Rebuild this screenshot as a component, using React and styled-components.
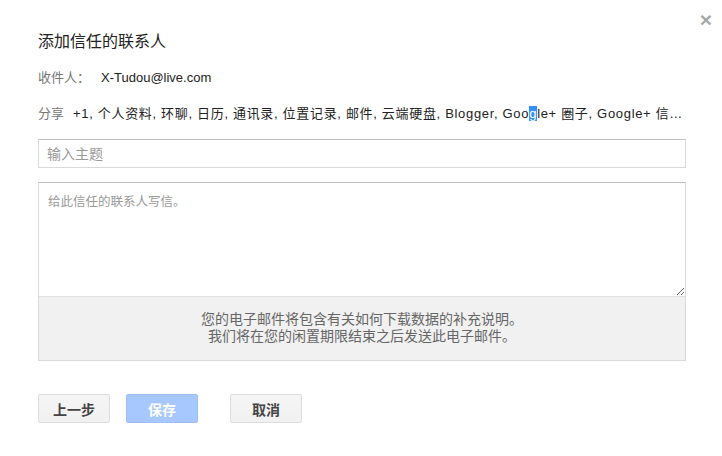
import styled, { createGlobalStyle } from "styled-components";

const GlobalStyle = createGlobalStyle`
  body {
    margin: 0;
    background: #ffffff;
    font-family: "Liberation Sans", Arial, "Noto Sans CJK SC", sans-serif;
    font-size: 13px;
    color: #222;
  }
`;

const Dialog = styled.div`
  position: relative;
  width: 722px;
  height: 456px;
  box-sizing: border-box;
  padding: 30px 36px 0 38px;
  background: #fff;
`;

const Close = styled.div`
  position: absolute;
  top: 11px;
  right: 9px;
  width: 14px;
  height: 18px;
  color: #a8a8a8;
  font-size: 21px;
  font-weight: bold;
  line-height: 18px;
  text-align: center;
  cursor: pointer;
`;

const Title = styled.div`
  font-size: 16px;
  line-height: 24px;
  color: #222;
`;

const InfoRow = styled.div`
  display: flex;
  align-items: center;
  gap: ${({ gap }) => gap || 8}px;
  margin-top: ${({ top }) => top}px;
  line-height: 18px;
  white-space: nowrap;
`;

const Label = styled.span`
  color: #777;
  flex-shrink: 0;
`;

const Value = styled.span`
  color: #222;
  flex: 1;
  min-width: 0;
  letter-spacing: ${({ spread }) => spread || 0}px;
`;

const Sel = styled.span`
  background: #3390ff;
  color: #fff;
`;

const SubjectInput = styled.input`
  display: block;
  box-sizing: border-box;
  width: 100%;
  height: 29px;
  margin-top: 16px;
  padding: 0 8px;
  border: 1px solid #d9d9d9;
  border-top-color: #c0c0c0;
  font: inherit;
  font-size: 14px;
  outline: none;
  &::placeholder {
    color: #999;
  }
`;

const MessageBox = styled.div`
  margin-top: 14px;
  border: 1px solid #d9d9d9;
  border-top-color: #c0c0c0;
`;

const MessageArea = styled.textarea`
  display: block;
  box-sizing: border-box;
  width: 100%;
  height: 113px;
  margin: 0;
  padding: 8px 9px;
  border: none;
  font: inherit;
  font-size: 12.5px;
  outline: none;
  resize: vertical;
  &::placeholder {
    color: #999;
  }
`;

const Notice = styled.div`
  border-top: 1px solid #e0e0e0;
  background: #f1f1f1;
  color: #666;
  font-size: 14px;
  line-height: 17px;
  text-align: center;
  padding: 14px 0 15px;
`;

const Buttons = styled.div`
  display: flex;
  margin-top: 33px;
`;

const Button = styled.button`
  box-sizing: border-box;
  min-width: 72px;
  height: 29px;
  margin-left: ${({ gapLeft }) => gapLeft || 0}px;
  padding: 0 8px;
  border-radius: 2px;
  font-family: inherit;
  font-size: 14px;
  font-weight: bold;
  cursor: default;
  border: 1px solid ${({ primary }) => (primary ? "#9dbff6" : "#dcdcdc")};
  background: ${({ primary }) =>
    primary ? "#a6c8ff" : "linear-gradient(#f5f5f5, #f1f1f1)"};
  color: ${({ primary }) => (primary ? "#fff" : "#444")};
`;

const App = () => {
  return (
    <>
      <GlobalStyle />
      <Dialog>
        <Close>×</Close>
        <Title>添加信任的联系人</Title>
        <InfoRow top={15} gap={11}>
          <Label>收件人：</Label>
          <Value>X-Tudou@live.com</Value>
        </InfoRow>
        <InfoRow top={18} gap={9}>
          <Label>分享</Label>
          <Value spread={0.68}>
            +1, 个人资料, 环聊, 日历, 通讯录, 位置记录, 邮件, 云端硬盘, Blogger, Goo
            <Sel>g</Sel>le+ 圈子, Google+ 信…
          </Value>
        </InfoRow>
        <SubjectInput placeholder="输入主题" />
        <MessageBox>
          <MessageArea placeholder="给此信任的联系人写信。" />
          <Notice>
            您的电子邮件将包含有关如何下载数据的补充说明。
            <br />
            我们将在您的闲置期限结束之后发送此电子邮件。
          </Notice>
        </MessageBox>
        <Buttons>
          <Button>上一步</Button>
          <Button primary gapLeft={16}>保存</Button>
          <Button gapLeft={32}>取消</Button>
        </Buttons>
      </Dialog>
    </>
  );
};

export default App;
